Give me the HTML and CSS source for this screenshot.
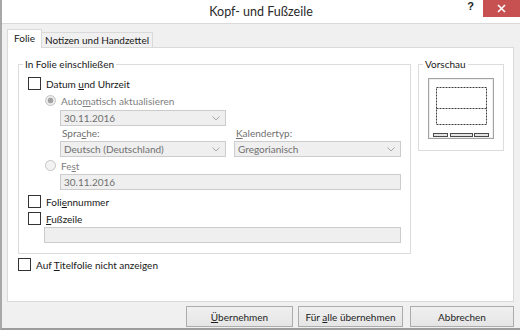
FILE: index.html
```html
<!DOCTYPE html>
<html lang="de">
<head>
<meta charset="utf-8">
<title>Kopf- und Fußzeile</title>
<link rel="stylesheet" href="styles.css">
</head>
<body>
<div class="window">
  <div class="titlebar">
    <div></div>
    <div class="title">Kopf- und Fußzeile</div>
    <div class="controls">
      <span class="help">?</span>
      <span class="close"><svg width="9" height="9" viewBox="0 0 9 9"><path d="M1 1L8 8M8 1L1 8" stroke="#fff" stroke-width="1.6"/></svg></span>
    </div>
  </div>
  <div class="body">
    <div class="tabs">
      <div class="tab active">Folie</div>
      <div class="tab">Notizen und Handzettel</div>
    </div>
    <div class="panel">
      <fieldset class="group main">
        <legend>In Folie einschließen</legend>
        <div class="gcontent">
          <div class="row"><span class="cb"></span><span>Datum <u>u</u>nd Uhrzeit</span></div>
          <div class="sub">
            <div class="row disabled"><span class="rb checked"></span><span>Auto<u>m</u>atisch aktualisieren</span></div>
            <div class="indent">
              <div class="select w1"><span>30.11.2016</span><svg class="arrow" width="8" height="5" viewBox="0 0 8 5"><path d="M0.5 0.5L4 4L7.5 0.5" fill="none" stroke="#a8a8a8"/></svg></div>
              <div class="pair">
                <div class="col">
                  <div class="lbl">Spra<u>c</u>he:</div>
                  <div class="select w1"><span>Deutsch (Deutschland)</span><svg class="arrow" width="8" height="5" viewBox="0 0 8 5"><path d="M0.5 0.5L4 4L7.5 0.5" fill="none" stroke="#a8a8a8"/></svg></div>
                </div>
                <div class="col">
                  <div class="lbl"><u>K</u>alendertyp:</div>
                  <div class="select w2"><span>Gregorianisch</span><svg class="arrow" width="8" height="5" viewBox="0 0 8 5"><path d="M0.5 0.5L4 4L7.5 0.5" fill="none" stroke="#a8a8a8"/></svg></div>
                </div>
              </div>
            </div>
            <div class="row disabled fest"><span class="rb"></span><span>Fe<u>s</u>t</span></div>
            <div class="indent">
              <div class="input wide"><span>30.11.2016</span></div>
            </div>
          </div>
          <div class="row folnr"><span class="cb"></span><span>Foli<u>e</u>nnummer</span></div>
          <div class="row"><span class="cb"></span><span><u>F</u>ußzeile</span></div>
          <div class="input footer"></div>
        </div>
      </fieldset>
      <fieldset class="group preview">
        <legend>Vorschau</legend>
        <svg class="pv" width="66" height="61" viewBox="0 0 66 61">
          <rect x="0.5" y="0.5" width="65" height="60" fill="#fff" stroke="#a3a3a3"/>
          <rect x="1.5" y="1.5" width="63" height="58" fill="none" stroke="#eeeeee"/>
          <rect x="8.5" y="9.5" width="50" height="37" fill="none" stroke="#3c3c3c" stroke-dasharray="2 1"/>
          <path d="M8.5 30.5H58.5" stroke="#3c3c3c" stroke-dasharray="2 1"/>
          <rect x="5.5" y="55.5" width="14" height="3" fill="#e4e4e4" stroke="#4a4a4a"/>
          <rect x="22.5" y="55.5" width="22" height="3" fill="#e4e4e4" stroke="#4a4a4a"/>
          <rect x="46.5" y="55.5" width="14" height="3" fill="#e4e4e4" stroke="#4a4a4a"/>
        </svg>
      </fieldset>
      <div class="row titlefolie"><span class="cb"></span><span>Auf <u>T</u>itelfolie nicht anzeigen</span></div>
    </div>
    <div class="buttons">
      <button class="btn b1"><span><u>Ü</u>bernehmen</span></button>
      <button class="btn b2"><span>Für <u>a</u>lle übernehmen</span></button>
      <button class="btn b3"><span>Abbrechen</span></button>
    </div>
  </div>
</div>
</body>
</html>
```
FILE: styles.css
```css
* { box-sizing: border-box; }
html, body { margin: 0; padding: 0; }
body {
  width: 520px;
  height: 330px;
  overflow: hidden;
  background: #f0f0f0;
  font-family: Lato, "Liberation Sans", sans-serif;
  font-size: 10px;
  color: #181818;
}
u { text-decoration: underline; text-underline-offset: 1px; }

.window {
  height: 330px;
  display: flex;
  flex-direction: column;
  border-left: 2px solid #a8a8a8;
  border-bottom: 2px solid #9c9c9c;
  background: #f0f0f0;
}

.titlebar {
  height: 24px;
  flex: none;
  background: #fff;
  border-bottom: 1px solid #dadada;
  display: grid;
  grid-template-columns: 1fr auto 1fr;
  align-items: start;
}
.title {
  font-size: 12.5px;
  line-height: 23px;
  color: #2a2a2a;
  white-space: nowrap;
}
.controls {
  justify-self: end;
  display: flex;
  align-items: flex-start;
}
.help {
  font-family: "Liberation Sans", sans-serif;
  font-weight: bold;
  font-size: 11px;
  line-height: 13px;
  color: #222;
  margin-right: 9px;
}
.close {
  width: 37px;
  height: 17px;
  background: #c75050;
  display: flex;
  align-items: center;
  justify-content: center;
}

.body {
  flex: 1;
  padding: 5px 6px 0 5px;
  display: flex;
  flex-direction: column;
}

.tabs {
  display: flex;
  align-items: flex-end;
  height: 19px;
  margin-bottom: -1px;
  position: relative;
  z-index: 1;
}
.tab {
  height: 16px;
  line-height: 14px;
  border: 1px solid #d9d9d9;
  background: #f0f0f0;
  text-align: center;
  width: 112px;
  margin-left: -1px;
  white-space: nowrap;
}
.tab.active {
  height: 19px;
  width: 35px;
  margin-left: 0;
  background: #fff;
  border-bottom: none;
  line-height: 17px;
  padding-bottom: 1px;
}

.panel {
  height: 255px;
  background: #fff;
  border: 1px solid #d9d9d9;
  padding: 9px 0 0 10px;
  display: grid;
  grid-template-columns: 393px 86px;
  column-gap: 7px;
  align-content: start;
  align-items: start;
}

.group {
  margin: 0;
  min-width: 0;
  border: 1px solid #dcdcdc;
}
.group legend {
  margin-left: 4px;
  padding: 0 2px;
  line-height: 14px;
  font-size: 10px;
}
.main { padding: 4px 0 10px 0; }
.gcontent { padding-left: 9px; }
.preview { padding: 7px 0 11px 0; }
.pv { display: block; margin-left: 9px; }

.row {
  display: flex;
  align-items: center;
  height: 17px;
  white-space: nowrap;
}
.cb {
  flex: none;
  width: 13px;
  height: 13px;
  border: 1px solid #333;
  background: #fff;
  margin-right: 5px;
}
.rb {
  flex: none;
  width: 11px;
  height: 11px;
  border-radius: 50%;
  border: 1px solid #c4c4c4;
  background: #f3f3f3;
  margin-right: 5px;
}
.rb.checked {
  background: radial-gradient(circle, #a2a2a2 0 2.4px, #ececec 3.2px);
}
.disabled { color: #808080; }

.sub { padding-left: 17px; }
.indent { padding-left: 15px; }

.select, .input {
  height: 16px;
  border: 1px solid #cccccc;
  background: #efefef;
  color: #6f6f6f;
  line-height: 14px;
  padding-left: 3px;
  display: flex;
  align-items: center;
  white-space: nowrap;
}
.select { margin-top: 1px; }
.select .arrow { margin-left: auto; margin-right: 5px; }
.w1 { width: 166px; }
.w2 { width: 167px; }
.pair { display: flex; gap: 8px; }
.col .select { margin-top: 1px; }
.lbl {
  line-height: 13px;
  height: 13px;
  padding-left: 2px;
  color: #6f6f6f;
  margin-top: 1px;
  white-space: nowrap;
}
.input.wide { width: 341px; }
.fest { margin-top: 0; }
.folnr { margin-top: 3px; }
.input.footer {
  width: 357px;
  margin-left: 16px;
}

.titlefolie {
  grid-column: 1 / -1;
  margin-top: 2px;
}

.buttons {
  display: flex;
  justify-content: flex-end;
  margin-top: 4px;
}
.btn {
  height: 21px;
  padding: 0;
  border: 1px solid #acacac;
  background: linear-gradient(#f0f0f0, #e5e5e5);
  font-family: inherit;
  font-size: 10px;
  color: #1e1e1e;
  text-align: center;
  white-space: nowrap;
}
.b1 { width: 107px; }
.b2 { width: 105px; margin-left: 5px; }
.b3 { width: 104px; margin-left: 7px; }
```
